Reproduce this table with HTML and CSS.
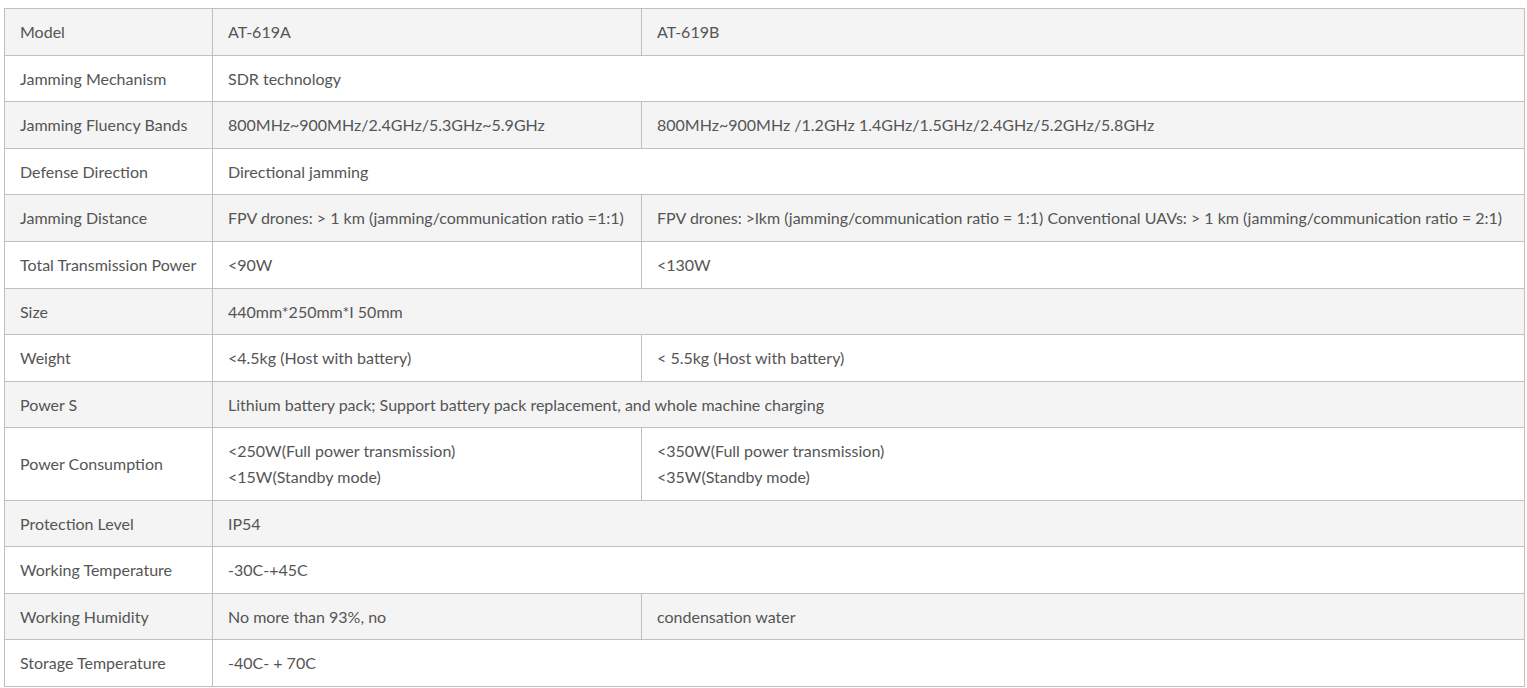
FILE: index.html
```html
<!DOCTYPE html>
<html>
<head>
<meta charset="utf-8">
<link rel="stylesheet" href="styles.css">
</head>
<body>
<div class="wrap">
<table class="spec">
<colgroup><col class="c1"><col class="c2"><col class="c3"></colgroup>
<tbody>
<tr><td>Model</td><td>AT-619A</td><td>AT-619B</td></tr>
<tr><td>Jamming Mechanism</td><td colspan="2">SDR technology</td></tr>
<tr><td>Jamming Fluency Bands</td><td>800MHz~900MHz/2.4GHz/5.3GHz~5.9GHz</td><td>800MHz~900MHz /1.2GHz 1.4GHz/1.5GHz/2.4GHz/5.2GHz/5.8GHz</td></tr>
<tr><td>Defense Direction</td><td colspan="2">Directional jamming</td></tr>
<tr><td>Jamming Distance</td><td>FPV drones: &gt; 1 km (jamming/communication ratio =1:1)</td><td>FPV drones: &gt;lkm (jamming/communication ratio = 1:1) Conventional UAVs: &gt; 1 km (jamming/communication ratio = 2:1)</td></tr>
<tr><td>Total Transmission Power</td><td>&lt;90W</td><td>&lt;130W</td></tr>
<tr><td>Size</td><td colspan="2">440mm*250mm*I 50mm</td></tr>
<tr><td>Weight</td><td>&lt;4.5kg (Host with battery)</td><td>&lt; 5.5kg (Host with battery)</td></tr>
<tr><td>Power S</td><td colspan="2">Lithium battery pack; Support battery pack replacement, and whole machine charging</td></tr>
<tr><td>Power Consumption</td><td>&lt;250W(Full power transmission)<br>&lt;15W(Standby mode)</td><td>&lt;350W(Full power transmission)<br>&lt;35W(Standby mode)</td></tr>
<tr><td>Protection Level</td><td colspan="2">IP54</td></tr>
<tr><td>Working Temperature</td><td colspan="2">-30C-+45C</td></tr>
<tr><td>Working Humidity</td><td>No more than 93%, no</td><td>condensation water</td></tr>
<tr><td>Storage Temperature</td><td colspan="2">-40C- + 70C</td></tr>
</tbody>
</table>
</div>
</body>
</html>
```

FILE: styles.css
```css
html, body {
  margin: 0;
  padding: 0;
  background: #ffffff;
}
.wrap {
  padding: 8px 0 0 4px;
}
.spec {
  width: 1520px;
  border-collapse: collapse;
  table-layout: fixed;
  font-family: Lato, "Open Sans", sans-serif;
  font-size: 16px;
  color: #555555;
}
.c1 { width: 208px; }
.c2 { width: 429px; }
.c3 { width: 883px; }
.spec td {
  border: 1px solid #c0c0c0;
  padding: 10px 15px;
  line-height: 25.6px;
  vertical-align: middle;
  text-align: left;
}
.spec tr:nth-child(odd) td {
  background: #f4f4f4;
}
.spec tr:nth-child(even) td {
  background: #ffffff;
}
```
